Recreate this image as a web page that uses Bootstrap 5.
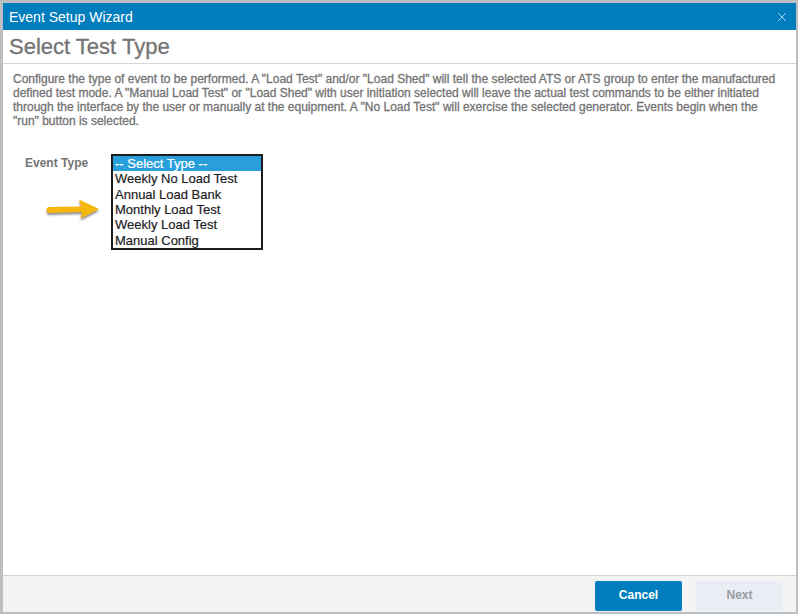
<!DOCTYPE html>
<html lang="en">
<head>
<meta charset="utf-8">
<meta name="viewport" content="width=device-width, initial-scale=1">
<title>Event Setup Wizard</title>
<link href="https://cdn.jsdelivr.net/npm/bootstrap@5.3.0/dist/css/bootstrap.min.css" rel="stylesheet">
<style>
body { font-family: "Liberation Sans", Arial, sans-serif; font-size: 12px; line-height: 14px; color: #747474; background: #fff; }
.wizard { border: solid #bcbfc1; border-width: 3px 2px 2px 3px; }
.wizard-bar { background: #007dbd; color: #fff; height: 27px; padding: 0 8px 0 6px; }
.wizard-name { font-size: 14px; line-height: 20px; }
.wizard-close { width: 12px; height: 12px; color: #a9d5ee; }
.wizard-heading { font-size: 22px; line-height: 33px; font-weight: 400; padding: 0 6px; border-bottom: 1px solid #d3d5d6; -webkit-text-stroke: 0.3px #747474; }
.wizard-intro { -webkit-text-stroke: 0.3px #747474; }
.wizard-body { padding: 8px 14px 8px 10px; }
.field-row { padding: 26px 0 0 12px; }
.field-side { width: 86px; padding-top: 2px; }
.pointer { margin: 26px 0 0 14px; }
.type-list { width: 152px; height: 96px; border: 2px solid #1d1d1f; border-radius: 0; padding: 0; overflow: hidden; font-size: 13px; color: #1d1d1f; background: #fff; outline: 0; -webkit-text-stroke: 0.2px; }
.type-list option { min-height: 15px; line-height: 15px; padding: 0 2px; }
.type-list option:nth-child(3n+2) { min-height: 16px; }
.type-list option:checked { background: #289fdb linear-gradient(#289fdb, #289fdb); color: #fff; }
.wizard-foot { background: #f4f4f4; border-top: 1px solid #d0d2d3; padding: 5px 13px 1px; gap: 14px; }
.wizard-foot .btn { width: 87px; height: 30px; padding: 0 0 2px; font-size: 12px; line-height: 14px; font-weight: 700; border: 0; border-radius: 2px; }
.btn-cancel, .btn-cancel:hover { background: #007dbd; color: #fff; }
.wizard-foot .btn-next:disabled { background: #e9eef5; color: #999ca0; opacity: 1; }
</style>
<script src="https://cdn.jsdelivr.net/npm/bootstrap@5.3.0/dist/js/bootstrap.bundle.min.js"></script>
</head>
<body>
<main class="wizard vh-100 d-flex flex-column">
  <header class="wizard-bar d-flex align-items-center justify-content-between">
    <span class="wizard-name">Event Setup Wizard</span>
    <button type="button" class="wizard-close btn p-0 border-0 d-flex align-items-center justify-content-center" aria-label="Close">
      <svg width="10" height="10" viewBox="0 0 10 10" fill="none" stroke="currentColor" stroke-width="1"><path d="M1 1L9 9M9 1L1 9"/></svg>
    </button>
  </header>
  <h1 class="wizard-heading m-0">Select Test Type</h1>
  <form class="wizard-body flex-grow-1">
    <p class="wizard-intro m-0">Configure the type of event to be performed. A "Load Test" and/or "Load Shed" will tell the selected ATS or ATS group to enter the manufactured defined test mode. A "Manual Load Test" or "Load Shed" with user initiation selected will leave the actual test commands to be either initiated through the interface by the user or manually at the equipment. A "No Load Test" will exercise the selected generator. Events begin when the "run" button is selected.</p>
    <div class="field-row d-flex align-items-start">
      <div class="field-side d-flex flex-column">
        <label class="fw-bold" for="eventType">Event Type</label>
        <svg class="pointer" width="64" height="30" viewBox="0 0 64 30" aria-hidden="true">
          <defs><filter id="soft" x="-20%" y="-30%" width="140%" height="170%"><feDropShadow dx="0" dy="2" stdDeviation="1.2" flood-color="#555" flood-opacity=".7"/></filter></defs>
          <path filter="url(#soft)" fill="#f7b60c" d="M9 11L42 10.500L40 3.500L60 13L41.500 22.500L43 16L9 17Q6 14 9 11Z"/>
        </svg>
      </div>
      <select id="eventType" class="type-list" size="6">
        <option selected>-- Select Type --</option>
        <option>Weekly No Load Test</option>
        <option>Annual Load Bank</option>
        <option>Monthly Load Test</option>
        <option>Weekly Load Test</option>
        <option>Manual Config</option>
      </select>
    </div>
  </form>
  <footer class="wizard-foot d-flex justify-content-end">
    <button type="button" class="btn btn-cancel">Cancel</button>
    <button type="button" class="btn btn-next" disabled>Next</button>
  </footer>
</main>
</body>
</html>
